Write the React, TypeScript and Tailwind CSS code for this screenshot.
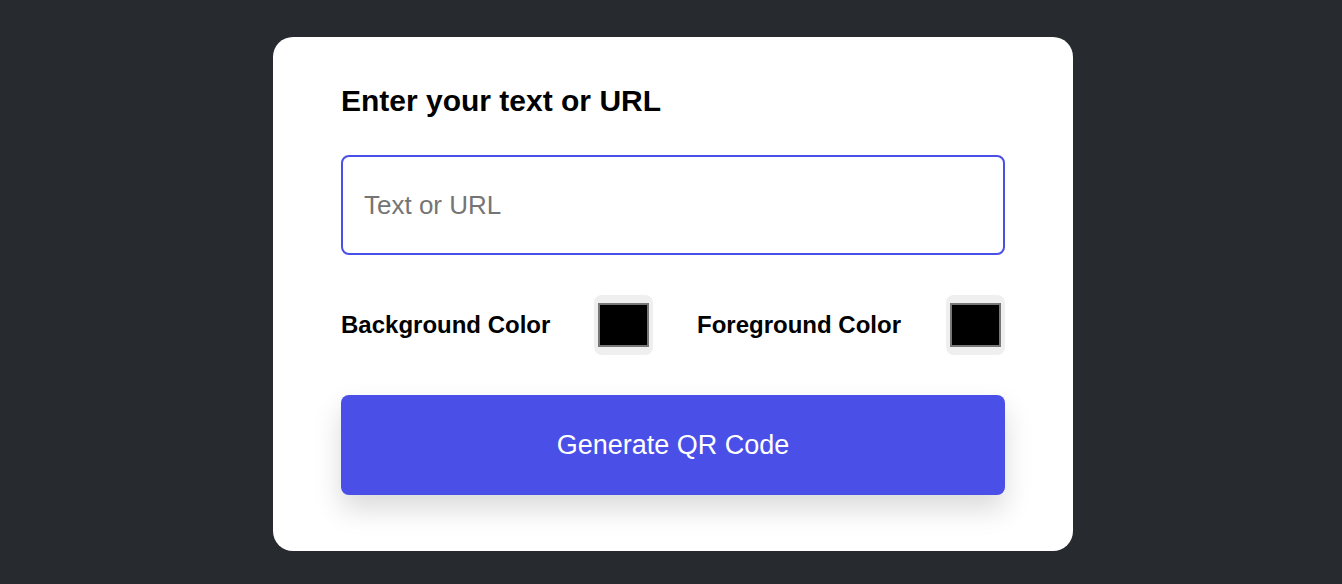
import React from "react";

function Swatch() {
  return (
    <div className="flex h-[60px] w-[59px] items-center justify-center rounded-lg bg-[#efefef]">
      <div className="h-[44px] w-[51px] border-2 border-[#777777] bg-black" />
    </div>
  );
}

export default function App() {
  return (
    <div
      className="flex h-[584px] w-full items-start justify-center bg-[#272a2e] pt-[37px] pl-[4px]"
      style={{ fontFamily: '"Liberation Sans", Arial, sans-serif' }}
    >
      <div className="flex w-[800px] flex-col rounded-[20px] bg-white px-[68px] pt-[47px] pb-[56px]">
        <h1 className="text-[30px] font-bold leading-[34px] text-black">Enter your text or URL</h1>
        <input
          type="text"
          placeholder="Text or URL"
          className="mt-[37px] h-[100px] w-full rounded-lg border-2 border-[#4a4fe8] px-[21px] text-[26px] text-black outline-none placeholder:text-[#757575]"
        />
        <div className="mt-[40px] flex items-center">
          <div className="flex w-[312px] items-center justify-between">
            <span className="text-[24px] font-bold text-black">Background Color</span>
            <Swatch />
          </div>
          <div className="ml-[44px] flex flex-1 items-center justify-between">
            <span className="text-[24px] font-bold text-black">Foreground Color</span>
            <Swatch />
          </div>
        </div>
        <button className="mt-[40px] h-[100px] w-full rounded-lg bg-[#4a4fe8] text-[27px] text-white shadow-[0_14px_28px_rgba(0,0,0,0.15)]">
          Generate QR Code
        </button>
      </div>
    </div>
  );
}
